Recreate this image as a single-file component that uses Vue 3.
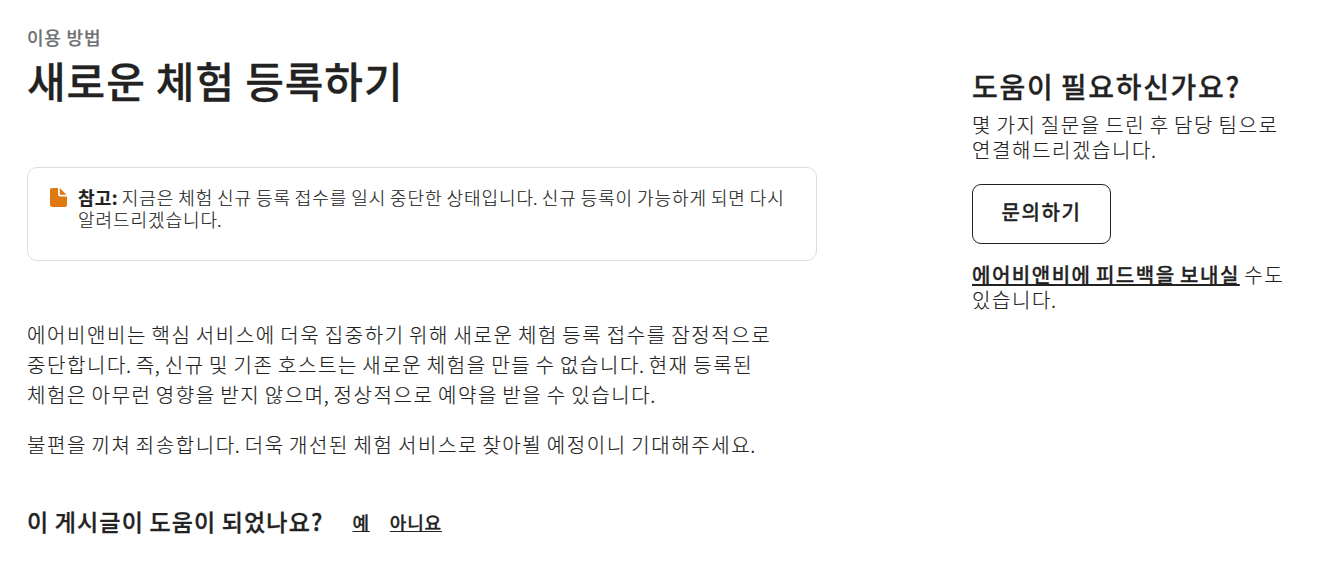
<script setup>
import { ref, h } from 'vue';
const answer = ref('');
const paragraphs = [
    ['에어비앤비는 핵심 서비스에 더욱 집중하기 위해 새로운 체험 등록 접수를 잠정적으로', '중단합니다. 즉, 신규 및 기존 호스트는 새로운 체험을 만들 수 없습니다. 현재 등록된', '체험은 아무런 영향을 받지 않으며, 정상적으로 예약을 받을 수 있습니다.'],
    ['불편을 끼쳐 죄송합니다. 더욱 개선된 체험 서비스로 찾아뵐 예정이니 기대해주세요.'],
];
// punctuation is set tighter than the hangul around it
const Spaced = ({ text }) => text.split(/([.,])/).map((part) =>
    /^[.,]$/.test(part) ? h('span', { class: 'mark' }, part) : part);
Spaced.props = ['text'];
</script>

<template>
    <main class="page">
        <article class="article">
            <p class="kind">이용 방법</p>
            <h1>새로운 체험 등록하기</h1>
            <section class="note">
                <svg class="note-icon" viewBox="0 0 17 19">
                    <path d="M2 0h6v6a2.500 2.500 0 0 0 2.500 2.500H17v8a2.500 2.500 0 0 1-2.500 2.500h-12A2.500 2.500 0 0 1 0 16.500V2a2 2 0 0 1 2-2z" />
                    <path d="M9.700 0L16.500 6.800h-5.800a1 1 0 0 1-1-1z" />
                </svg>
                <p>
                    <span class="line"><strong>참고:</strong>&nbsp;<Spaced text="지금은 체험 신규 등록 접수를 일시 중단한 상태입니다. 신규 등록이 가능하게 되면 다시" /></span>
                    <span class="line"><Spaced text="알려드리겠습니다." /></span>
                </p>
            </section>
            <div class="body">
                <p v-for="(lines, i) in paragraphs" :key="i">
                    <span v-for="line in lines" :key="line" class="line"><Spaced :text="line" /></span>
                </p>
            </div>
            <div class="feedback">
                <h2>이 게시글이 도움이 되었나요?</h2>
                <button @click="answer = 'yes'">예</button>
                <button @click="answer = 'no'">아니요</button>
            </div>
        </article>
        <aside class="help">
            <h2>도움이 필요하신가요?</h2>
            <p>
                <span class="line">몇 가지 질문을 드린 후 담당 팀으로</span>
                <span class="line"><Spaced text="연결해드리겠습니다." /></span>
            </p>
            <button class="contact">문의하기</button>
            <p>
                <span class="line"><a href="#feedback">에어비앤비에 피드백을 보내실</a> 수도</span>
                <span class="line"><Spaced text="있습니다." /></span>
            </p>
        </aside>
    </main>
</template>

<style>
body {
    margin: 0;
    background: #fff;
}

.mark {
    margin-left: -1px;
    letter-spacing: 0.4px;
}
</style>

<style scoped>
.page {
    display: flex;
    justify-content: space-between;
    box-sizing: border-box;
    width: 1329px;
    height: 572px;
    padding: 25px 27px 0;
    overflow: hidden;
    color: #222;
    font-family: 'Noto Sans CJK KR', sans-serif;
    font-weight: 300;
    -webkit-text-stroke: 0.15px #222;
}

p,
h1,
h2 {
    margin: 0;
}

.line {
    display: block;
    white-space: nowrap;
}

.article {
    width: 790px;
}

.kind {
    color: #717171;
    font-size: 18px;
    line-height: 24px;
    font-weight: 500;
    letter-spacing: 0.8px;
    -webkit-text-stroke: 0.2px #717171;
}

h1,
h2,
button {
    -webkit-text-stroke: 0.3px #222;
}

h1 {
    margin-top: 7px;
    font-size: 42px;
    line-height: 48px;
    font-weight: 500;
    letter-spacing: 0.95px;
    word-spacing: -0.3px;
}

.note {
    display: flex;
    box-sizing: border-box;
    height: 94px;
    margin-top: 63px;
    padding: 18px 22px;
    border: 1px solid #ddd;
    border-radius: 10px;
    font-size: 18px;
    line-height: 22px;
    letter-spacing: 0.93px;
    word-spacing: -1px;
}

.note-icon {
    flex: none;
    width: 17px;
    height: 19px;
    margin: 2px 11px 0 0;
    fill: #e07912;
}

strong {
    font-weight: 700;
    letter-spacing: 0.3px;
}

.body {
    margin-top: 59px;
    font-size: 20px;
    line-height: 30px;
    letter-spacing: 1.6px;
    word-spacing: -1.6px;
}

.body p + p {
    margin-top: 20px;
}

.feedback {
    display: flex;
    align-items: center;
    margin-top: 46px;
}

.feedback h2 {
    margin-right: 29px;
    font-size: 23px;
    line-height: 30px;
    font-weight: 500;
    letter-spacing: 1.15px;
    word-spacing: -0.9px;
}

button {
    padding: 0;
    border: 0;
    background: none;
    color: #222;
    font-family: inherit;
    font-weight: 500;
    cursor: pointer;
}

.feedback button {
    margin: 2px 20px 0 0;
    font-size: 18px;
    line-height: 24px;
    letter-spacing: 0.8px;
    text-decoration: underline;
}

.help {
    width: 330px;
    padding-top: 44px;
    font-size: 20px;
    line-height: 25px;
    letter-spacing: 1.6px;
    word-spacing: -1.6px;
}

.help h2 {
    margin-bottom: 9px;
    font-size: 28px;
    line-height: 34px;
    font-weight: 500;
    letter-spacing: 1.7px;
}

.help .contact {
    width: 139px;
    height: 60px;
    margin: 22px 0 18px;
    padding-bottom: 6px;
    border: 1px solid #222;
    border-radius: 9px;
    font-size: 20px;
    letter-spacing: 1.6px;
}

.help a {
    color: #222;
    font-weight: 500;
    letter-spacing: 1.52px;
    -webkit-text-stroke: 0.3px #222;
    text-decoration: underline;
}
</style>
